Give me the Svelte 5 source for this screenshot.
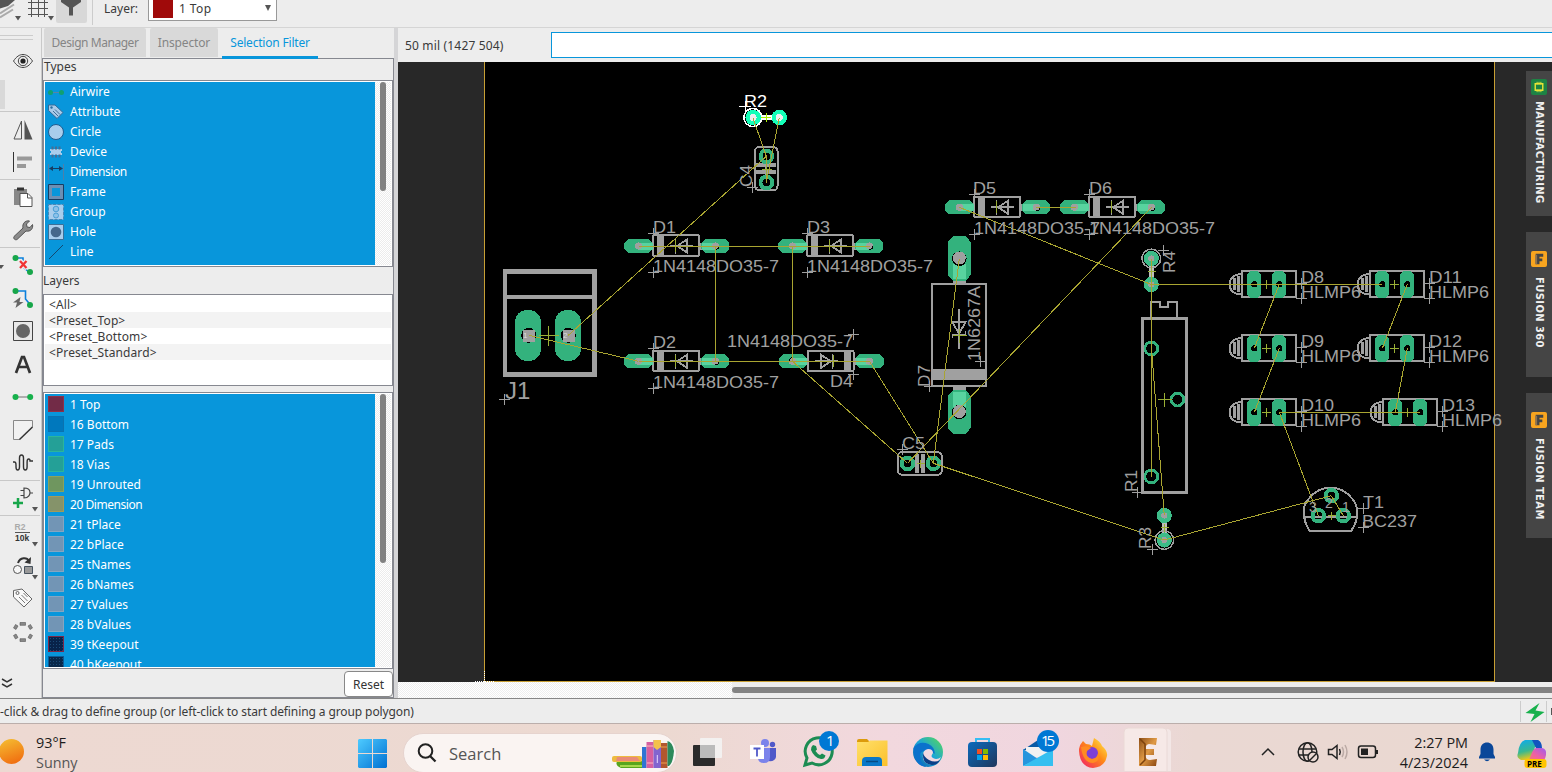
<script>
  const types = ['Airwire', 'Attribute', 'Circle', 'Device', 'Dimension', 'Frame', 'Group', 'Hole', 'Line'];
  const presets = ['<All>', '<Preset_Top>', '<Preset_Bottom>', '<Preset_Standard>'];
  const layers = [
    ['1', 'Top', '#722b47', '#8f3048'],
    ['16', 'Bottom', '#0078bd', '#0a72b0'],
    ['17', 'Pads', '#24a097', '#2bb59a'],
    ['18', 'Vias', '#24a097', '#2bb59a'],
    ['19', 'Unrouted', '#6f965f', '#8aa25c'],
    ['20', 'Dimension', '#85936a', '#a39a5a'],
    ['21', 'tPlace', '#7295b5', '#86a5c0'],
    ['22', 'bPlace', '#7295b5', '#86a5c0'],
    ['25', 'tNames', '#7295b5', '#86a5c0'],
    ['26', 'bNames', '#7295b5', '#86a5c0'],
    ['27', 'tValues', '#7295b5', '#86a5c0'],
    ['28', 'bValues', '#7295b5', '#86a5c0'],
    ['39', 'tKeepout', '#08234a', '#7d2848'],
    ['40', 'bKeepout', '#08284a', '#0a5c98']
  ];
  const tools = [
    ['eye', 30, 0], ['gap', 35, 0], ['sep', 1, 0], ['mirror', 36, 0], ['align', 28, 3], ['sep', 1, 0],
    ['paste', 34, 0], ['wrench', 32, 1], ['sep', 1, 0], ['ripup', 34, 0], ['route', 32, 0], ['hole', 34, 0],
    ['text', 34, 0], ['wire', 30, 0], ['miter', 36, 0], ['meander', 30, 2], ['sep', 1, 0], ['gate', 34, 0],
    ['sep', 1, 0], ['value', 34, 0], ['replace', 34, 0], ['tag', 28, 0], ['ring', 40, 0]
  ];
  const docks = [['MANUFACTURING', 'chip', 0], ['FUSION 360', 'f', 11], ['FUSION TEAM', 'f', 11]];

  const diodes = [[677, 246, 0], [677, 361.3, 0], [831, 246, 0], [831, 361.3, 180], [998, 207.3, 0], [1113, 207.3, 0]];
  const leds = [[1266.5, 284.3], [1266.5, 348.3], [1266.5, 412.3], [1394.5, 284.3], [1394.5, 348.3], [1407.5, 412.3]];
  const rings = [
    [766.3, 156.3, 4], [766.3, 182.5, 4], [907.5, 463.3, 4], [933.3, 463.3, 4],
    [1331.3, 495.7, 4], [1318.3, 515.7, 4], [1343.3, 515.7, 4],
    [1151.3, 348.5, 2.8], [1177.5, 399.5, 2.8], [1151.3, 476.5, 2.8]
  ];
  const wires = [
    [752.8, 117.5, 766.3, 156.3], [779.3, 117.5, 766.3, 182.5], [766.3, 156.3, 766.3, 182.5], [766.3, 156.3, 568.3, 335.3],
    [528.7, 335.3, 638.5, 361.3], [638.5, 246.5, 869.5, 246.5], [638.5, 361.5, 869.5, 361.5], [715.5, 246, 715.5, 361],
    [792.5, 246, 792.5, 361], [792.5, 361.3, 907.5, 463.3], [869.5, 361.3, 933.3, 463.3], [959.3, 258.7, 933.3, 463.3],
    [1151.5, 207.3, 907.5, 463.3], [959.3, 207.3, 1151.3, 284.5], [1035.5, 207.5, 1075.5, 207.5],
    [1151.3, 284.5, 1382.3, 284.5], [1151.5, 284.5, 1151.5, 476.5], [1151.5, 348.5, 1164.3, 515.5],
    [1279.3, 284.3, 1254.3, 348.3], [1279.3, 348.3, 1254.3, 412.3], [1279.3, 412.5, 1420.3, 412.5],
    [1407.3, 284.3, 1382.3, 348.3], [1407.3, 348.3, 1395.3, 412.3], [1279.3, 412.3, 1318.3, 515.7],
    [1331.3, 495.7, 1343.3, 515.7], [1164.3, 540, 1331.3, 495.7], [933.3, 463.3, 1164.3, 540], [1151.5, 258.5, 1151.5, 284]
  ];
  const labels = [
    ['D1', 653, 233, 23], ['D3', 807, 233, 23], ['D2', 653, 348, 23], ['D4', 830, 387, 23], ['D5', 973, 194, 23], ['D6', 1089, 194, 23],
    ['1N4148DO35-7', 653, 272, 126], ['1N4148DO35-7', 807, 272, 126], ['1N4148DO35-7', 653, 388, 126], ['1N4148DO35-7', 727, 347, 126],
    ['1N4148DO35-7', 974, 234, 126], ['1N4148DO35-7', 1089, 234, 126],
    ['C5', 902, 449, 23], ['T1', 1363, 508, 21], ['BC237', 1362, 527, 55],
    ['D8', 1301, 283, 23], ['D9', 1301, 347, 23], ['D10', 1301, 411, 33], ['D11', 1429, 283, 33], ['D12', 1429, 347, 33], ['D13', 1442, 411, 33],
    ['HLMP6', 1301, 298, 60], ['HLMP6', 1301, 362, 60], ['HLMP6', 1301, 426, 60], ['HLMP6', 1429, 298, 60], ['HLMP6', 1429, 362, 60], ['HLMP6', 1442, 426, 60]
  ];
  const turned = [
    ['C4', 752, 187, 22], ['1N6267A', 980, 361, 75], ['D7', 929.5, 387, 22], ['R4', 1175, 273, 22], ['R1', 1136.5, 492, 22], ['R3', 1151, 549, 22]
  ];
  const marks = [
    [653.5, 233.5], [653.5, 272.5], [807.5, 233.5], [807.5, 272.5], [653.5, 348.5], [653.5, 388.5], [853.5, 334.5], [853.5, 374.5],
    [974.5, 194.5], [974.5, 234.5], [1089.5, 194.5], [1089.5, 234.5], [504.5, 399.5], [752.5, 187.5], [980.5, 361.5], [929.5, 386.5],
    [902.5, 449.5], [1163.5, 250.5], [1137.5, 492.5], [1152.5, 549.5], [1363.5, 508.5], [1363.5, 527.5],
    [1301.5, 283.5], [1301.5, 298.5], [1301.5, 347.5], [1301.5, 362.5], [1301.5, 411.5], [1301.5, 426.5],
    [1429.5, 283.5], [1429.5, 298.5], [1429.5, 347.5], [1429.5, 362.5], [1442.5, 411.5], [1442.5, 426.5]
  ];
  const centres = [[548.5, 335.5, 10], [766.5, 169.5, 5], [920.5, 463.5, 4], [959.5, 335.5, 7], [1164.5, 399.5, 7], [1151.5, 271.5, 4], [1164.5, 527.5, 4], [1331.5, 515.5, 4]];
</script>

{#snippet caret()}
  <path d="M18.5 15.5h6l-3 4.500z" fill="#555" />
{/snippet}

{#snippet tool(name)}
  <svg class="ico" viewBox="0 0 20 20">
    {#if name === 'eye'}
      <path d="M.5 10C3.500 5.500 6.500 3.500 10 3.500s6.500 2 9.500 6.500c-3 4.500-6 6.500-9.500 6.500S3.500 14.500.500 10z" fill="none" stroke="#444" />
      <circle cx="10" cy="10" r="4.700" fill="none" stroke="#444" /><circle cx="10" cy="10" r="2.600" fill="#222" />
    {:else if name === 'mirror'}
      <path d="M8.500 1v18H1z" fill="none" stroke="#555" /><path d="M11.500 0v19.500h8z" fill="#555" />
    {:else if name === 'align'}
      <path d="M.5 0v20" stroke="#333" /><path d="M4 4.500h15v4H4zM4 12h9v4H4z" fill="#999" />
    {:else if name === 'paste'}
      <path d="M1 2h13v4H7v12H1z" fill="#888" /><path d="M4 .500h7v3H4z" fill="#333" />
      <path d="M7 6.500h8l4 4v9H7z" fill="#fff" stroke="#555" /><path d="M14.500 6.500v4.500H19" fill="none" stroke="#555" />
    {:else if name === 'wrench'}
      <path d="M1 16.500 10 8C9 4 12 0 16.500 1l-3 3 .500 3 3 .500 2.500-3c1 4-2 7.500-6.500 6.500L4 19.500c-2 1-4-1-3-3z" fill="#8b8b8b" stroke="#555" />
    {:else if name === 'ripup'}
      <path d="M2 3h8v9l7 6" fill="none" stroke="#0a80dc" stroke-width="1.600" /><circle cx="2.500" cy="3" r="3" fill="#17a64a" /><circle cx="17" cy="17" r="3" fill="#17a64a" />
      <path d="M6.500 5.500l8 8M14.500 5.500l-8 8" stroke="#eee" stroke-width="5" /><path d="M7 6l6.500 7M13.500 6 7 13" stroke="#f03434" stroke-width="2.300" />
      <path d="M-15 10h6l-3 4z" fill="#555" />
    {:else if name === 'route'}
      <path d="M2 3h10.500v8l5 6" fill="none" stroke="#0a80dc" stroke-width="1.600" /><circle cx="2.500" cy="3" r="3" fill="#17a64a" /><circle cx="17" cy="17" r="3" fill="#17a64a" />
      <path d="M7.500 9 0 14.500h4L2.500 20l8-6H6.500z" fill="#666" />
    {:else if name === 'hole'}
      <path d="M.5.500h19v19H.500z" fill="#e9e9e9" stroke="#444" /><circle cx="10" cy="10" r="7" fill="#666" />
    {:else if name === 'text'}
      <path d="M3 18 9 2h2l6 16M5.500 12h9" fill="none" stroke="#333" stroke-width="2.700" />
    {:else if name === 'wire'}
      <path d="M3 10h14" stroke="#999" stroke-width="1.500" /><circle cx="2.500" cy="10" r="3" fill="#17b14c" /><circle cx="17.200" cy="10" r="3" fill="#17b14c" />
    {:else if name === 'miter'}
      <path d="M19.500 7V.500H.500v19H7" fill="#f1f1f1" stroke="#888" /><path d="M6.500 19.500 19.500 7" stroke="#333" stroke-width="1.500" />
    {:else if name === 'meander'}
      <path d="M0 9h1.500q1.500 0 1.500 3v2q0 3 1.700 3t1.800-3V5q0-3 2-3t2 3v9q0 3 1.800 3t1.800-3V9q0-3 1.500-3t1.400 2H20" fill="none" stroke="#333" stroke-width="1.400" />
    {:else if name === 'gate'}
      <path d="M11 0c5 0 6 3 6 4.500s-1 5.500-6 5.500zM7.500 2.500H11M7.500 7.500H11M17 5h3" fill="none" stroke="#444" stroke-width="1.200" />
      <path d="M5 10v10M0 15h10" stroke="#17a64a" stroke-width="2.500" /><path d="M19 19h6l-3 4.500z" fill="#555" />
    {:else if name === 'value'}
      <text x="1.500" y="7" class="tt" fill="#aaa">R2</text><path d="M2 9.500h15" stroke="#555" /><text x="2" y="18" class="tt" fill="#333">10k</text><path d="M19 19h6l-3 4.500z" fill="#555" />
    {:else if name === 'replace'}
      <path d="M5 6c2-6 9-6 11-2" fill="none" stroke="#333" stroke-width="2" /><path d="m18 0-.5 7-6-1.500z" fill="#333" />
      <circle cx="4.500" cy="12.500" r="4" fill="#f7f7f7" stroke="#555" /><path d="M11.500 9.500h8v7h-8z" fill="#999" stroke="#47525e" /><path d="M19 18h6l-3 4.500z" fill="#555" />
    {:else if name === 'tag'}
      <path d="M.5 2.500V9L11 19l8-8L9 1z" fill="#f8f8f8" stroke="#666" /><circle cx="4.500" cy="5" r="1.500" fill="none" stroke="#666" /><path d="m6 9 6 6M8.500 7l6 6M10.500 5l4 4" stroke="#777" />
    {:else if name === 'ring'}
      <g fill="#888" stroke="#555" stroke-width=".6"><path d="M7 .500h5.500v2.800H7zM7 16.700h5.500v2.800H7zM.500 6l2-3.500 2.500 1.500-2 3.500zM15 4l2.500-1.500 2 3.500L17 7.500zM.500 13.500 3 12l2 3.500L2.500 17zM17 12l2.500 1.500-2 3.500-2.500-1.500z" /></g>
    {/if}
  </svg>
{/snippet}

{#snippet typeIcon(name)}
  <svg class="tico" viewBox="0 0 16 16">
    {#if name === 'Airwire'}
      <path d="M5 8.500h6" stroke="#5b83a5" /><circle cx="2.500" cy="8.500" r="2.500" fill="#10a071" /><circle cx="13.500" cy="8.500" r="2.500" fill="#10a071" />
    {:else if name === 'Attribute'}
      <path d="M.5 1v5.500l8.500 8 6-6-8-7.500z" fill="#a9cbe9" stroke="#356a98" /><circle cx="3.500" cy="3.500" r="1.200" fill="#2b6c9e" /><path d="m5 7 5 5M7 5.500l5 5" stroke="#416d95" />
    {:else if name === 'Circle'}
      <circle cx="8" cy="8" r="7.500" fill="#a9cdec" stroke="#1f5c90" />
    {:else if name === 'Device'}
      <path d="M2 5h12v2h-1v2h1v2H2V9h1V7H2z" fill="#a9cdec" /><path d="M4.500 2.500v3M8 2.500v3M11.500 2.500v3M4.500 10.500v3M8 10.500v3M11.500 10.500v3" stroke="#446d95" stroke-width="2" />
    {:else if name === 'Dimension'}
      <path d="M.5 0v16M15.500 0v16" stroke="#4d80aa" /><path d="M2 4.500h12" stroke="#163d63" /><path d="M1 4.500 5 2v5zM15 4.500 11 2v5z" fill="#163d63" />
    {:else if name === 'Frame'}
      <path d="M.5.500h15v15H.500z" fill="#6c8fb4" stroke="#163d63" /><path d="M4 4h8v8H4z" fill="#0896db" />
    {:else if name === 'Group'}
      <path d="M.5.500h15v15H.500z" fill="#a9cdec" stroke="#4a86b5" stroke-dasharray="3 1.500" /><g fill="#8dc1e8" stroke="#4b9fd6"><circle cx="8" cy="5" r="2.800" /><circle cx="8" cy="11.500" r="2.500" /></g>
    {:else if name === 'Hole'}
      <path d="M.5.500h15v15H.500z" fill="#a9cdec" stroke="#3b7099" /><circle cx="8" cy="8" r="5.300" fill="#46688b" />
    {:else}
      <path d="M1 15 15 1" stroke="#14486f" />
    {/if}
  </svg>
{/snippet}

<div class="screen">
  <header class="top">
    <svg class="stack" viewBox="0 0 92 26">
      <path d="M0 17.500l13-8M0 13.500l14-9" stroke="#aaa" fill="none" stroke-width="2" /><path d="M0 8.500 8 6l7-6H0z" fill="#555" />
      <path d="M15 16h6l-3 4.500zM48 16h6l-3 4.500z" fill="#555" />
      <path d="M31.500 0v17M38.500 0v17M44.500 0v17M28 2.500h20M28 8.500h20M28 14.500h20" stroke="#555" />
      <rect x="56" y="-4" width="31" height="27" rx="2" fill="#d8d8d8" /><path d="M61 0h20v2l-8 5.500v8h-4v-8L61 2z" fill="#555" />
    </svg>
    <span class="vsep"></span>
    <span class="lab">Layer:</span>
    <div class="combo"><i></i><span>1 Top</span><svg viewBox="0 0 6 6"><path d="M0 0h6L3 6z" fill="#555" /></svg></div>
  </header>

  <main>
    <nav class="tools">
      <div class="grip"></div>
      {#each tools as [name, h, mb]}
        {#if name === 'sep'}<hr />
        {:else if name === 'gap'}<div class="gap"><i></i></div>
        {:else}<div class="tool" style="height:{h}px;margin-bottom:{mb}px">{@render tool(name)}</div>{/if}
      {/each}
      <svg class="more" viewBox="0 0 12 10"><path d="m1 1 5 3 5-3M1 6l5 3 5-3" fill="none" stroke="#333" stroke-width="1.500" /></svg>
    </nav>

    <aside>
      <div class="tabs"><span class="t1">Design Manager</span><span class="t2">Inspector</span><span class="t3">Selection Filter</span></div>
      <section class="panel">
        <h3>Types</h3>
        <div class="list types">
          <ul>{#each types as t}<li>{@render typeIcon(t)}<span class:tight={t === 'Dimension'}>{t}</span></li>{/each}</ul>
          <div class="bar"><i style="height:109px"></i></div>
        </div>
        <h3 class="second">Layers</h3>
        <div class="presets">{#each presets as p}<div>{p}</div>{/each}</div>
        <div class="list layers">
          <ul>{#each layers as [n, t, c, b]}<li><i class:dots={n > 38} style="background-color:{c};border-color:{b}"></i><span class:tight={t === 'Dimension'}>{n} {t}</span></li>{/each}</ul>
          <div class="bar"><i style="height:169px"></i></div>
        </div>
        <div class="foot"><button>Reset</button></div>
      </section>
    </aside>

    <div class="editor">
      <div class="cmd"><span>50 mil (1427 504)</span><div class="input"></div></div>
      <div class="canvas">
        <svg class="board" viewBox="398 62 1128 620">
          <rect x="484" y="62" width="1011" height="620" fill="#000" />
          <path d="M484.500 62V681.500H1494.500V62" fill="none" stroke="#c79f34" />
          <path d="M475 681.500h20M484.500 671v11" stroke="#fff" stroke-dasharray="1 1" />

          <g class="line">
            <rect x="505.200" y="271.300" width="89.300" height="103.300" stroke-width="4.500" /><path d="M505 297h90" stroke-width="4" />
            <rect x="755" y="147.200" width="22.500" height="43" rx="4" stroke-width="2" />
            <path d="M756 165h20M756 171.700h20" stroke-width="4" /><path d="M766.300 160v19" stroke-width="2" />
            <rect x="898" y="452.200" width="43.700" height="22.500" rx="4" stroke-width="2" />
            <path d="M917 454v19M923 454v19" stroke-width="4" />
            <rect x="932" y="284" width="54" height="102" stroke-width="2" /><path d="M932 374.500h54" stroke-width="11" />
            <path d="M959.300 278v5M959.300 387v5" stroke-width="13" />
            <path d="M959 309v40M952.500 322h13L959 334zM952.500 338v-3h13v-4" stroke-width="1.800" />
            <rect x="1142.500" y="318.500" width="43.500" height="173.500" stroke-width="3" />
            <path d="M1150.500 318v-16h9.500v5h7.500v-5h9.500v16" stroke-width="2" />
            <path d="M1309.500 530.500C1302 519 1302 505 1309 498.500a27 27 0 0 1 43 0c7 7 7 21-.5 32zM1304 516.700h53" stroke-width="2" />
          </g>

          {#each diodes as [x, y, r]}
            <g transform="translate({x} {y}) rotate({r})">
              <g class="line"><rect x={r ? -22.5 : -24} y={r ? -10 : -10.7} width="46" height="20.500" rx="1.500" stroke-width="2" /><path d="M-16.500-10v20" stroke-width="7" /><path d="M-25 0h2M23 0h2" stroke-width="7" />
                <path d="M-7 0H16M-1.500-7.500V7.500M10-6.500V6.500L0 0z" stroke-width="1.800" /></g>
              <path class="pad" d="M-53-3l4-4h20.500l4 4V3l-4 4H-49l-4-4zM24-3l4-4H48l4 4V3l-4 4H28l-4-4z" />
              <path d="M-38.500 0h14M24.500 0h14" stroke="#58d39f" stroke-width="7" />
              <circle cx="-38.500" cy="0" r="3.600" fill="#a0a0a0" /><circle cx="38.500" cy="0" r="3.600" fill="#a0a0a0" /><path d="M38 3.500a3.500 3.500 0 0 0 4-3" stroke="#000" fill="none" />
              <path d="M-2-6v12" stroke="#9aaf35" />
            </g>
          {/each}

          {#each leds as [x, y]}
            <g transform="translate({x} {y})">
              <g class="line"><rect x="-24.300" y="-13" width="53.500" height="26" stroke-width="2" /><path d="M-25-10h-3q-9 2-9 10t9 10h3" stroke-width="2" /><path d="M-28-8v16M-32-6V6" stroke-width="2.500" /></g>
              <path class="pad" d="M-19.500-10l3.500-3.700h7l3.500 3.700V10l-3.500 3.700h-7l-3.500-3.700zM5.500-10l3.500-3.700h7l3.500 3.700V10l-3.500 3.700H9L5.500 10z" />
              <circle cx="-12.200" cy="0" r="3.200" /><circle cx="12.800" cy="0" r="3.200" />
              <path d="M-4.500 0h9M0-4.500v9" stroke="#9aaf35" />
            </g>
          {/each}

          <rect class="pad" x="515" y="310" width="26" height="51" rx="12" /><rect class="pad" x="555" y="310" width="26" height="51" rx="12" />
          <circle cx="528.700" cy="335.300" r="7.500" /><circle cx="568.300" cy="335.300" r="7.500" />
          <path d="M522.500 329.500h12v12h-12zM562.500 329.500h12v12h-12z" fill="#a0a0a0" />
          <text x="523" y="338" class="tiny">1</text><text x="563" y="338" class="tiny">2</text>
          <path class="pad" d="M948 242l5-6h12.700l5 6v33l-5 6H953l-5-6zM948 396l5-6h12.700l5 6v32l-5 6H953l-5-6z" />
          <path d="M959.300 264v15M959.300 392v15" stroke="#58d39f" stroke-width="13" />
          <circle cx="959.300" cy="258.700" r="7.300" /><circle cx="959.300" cy="258" r="6.500" fill="#a0a0a0" /><circle cx="959.300" cy="412" r="7.300" /><circle cx="959.300" cy="411.500" r="6.500" fill="#a0a0a0" />
          {#each rings as [x, y, w]}<circle cx={x} cy={y} r={7.800 - w / 2} fill="none" stroke="#33b27d" stroke-width={w} />{/each}

          <path d="M1151.300 258v26M1164.300 516v24" stroke="#bdbdbd" stroke-width="5" />
          <g fill="none" stroke="#a0a0a0" stroke-width="1.500"><circle cx="1151.300" cy="258.500" r="9.300" /><circle cx="1164.300" cy="540" r="9.300" /></g>
          {#each [[1151.3, 258.5], [1151.3, 284.5], [1164.3, 515.5], [1164.3, 540]] as [x, y]}
            <circle cx={x} cy={y} r="5.300" fill="#a0a0a0" stroke="#3dbb88" stroke-width="4.500" />
          {/each}
          <path d="M753 117.500h26" stroke="#fff" stroke-width="5" /><circle cx="752.800" cy="117.500" r="9" fill="#000" stroke="#fff" stroke-width="1.500" />
          {#each [753.2, 779.3] as x}<circle cx={x} cy="117.500" r="5.600" fill="#eee" stroke="#14ffb8" stroke-width="4.300" />{/each}
          <path d="M761 117.500h10M766.500 113v9" stroke="#a8f000" />

          {#each wires as [a, b, c, d]}<line x1={a} y1={b} x2={c} y2={d} class="air" />{/each}
          {#each centres as [x, y, s]}<path d="M{x - s} {y}h{2 * s}M{x} {y - s}v{2 * s}" stroke="#9aaf35" />{/each}
          {#each marks as [x, y]}<path d="M{x - 5.500} {y}h11M{x} {y - 5.500}v11" stroke="#a0a0a0" />{/each}
          {#each labels as [t, x, y, w]}<text {x} {y} textLength={w} lengthAdjust="spacingAndGlyphs">{t}</text>{/each}
          {#each turned as [t, x, y, w]}<text transform="translate({x} {y}) rotate(-90)" textLength={w} lengthAdjust="spacingAndGlyphs">{t}</text>{/each}
          <text x="505" y="399" class="big">J1</text>
          <text x="744" y="106.500" textLength="23" lengthAdjust="spacingAndGlyphs" class="hot">R2</text><path d="M739 106.500h12M745.500 101v11" stroke="#fff" />
          <text x="1309" y="512" class="pin">3</text><text x="1325" y="508" class="pin">2</text><text x="1342" y="512" class="pin">1</text>
        </svg>
        <div class="dock">
          {#each docks as [name, icon, gap]}
            <div class="dtab" style="padding-top:{gap + 7}px">
              <svg viewBox="0 0 17 17">
                {#if icon === 'chip'}<rect width="17" height="17" rx="2" fill="#1d8344" /><path d="M4.500 5h8v7h-8z" fill="none" stroke="#e8e337" stroke-width="1.500" /><path d="M6.500 3v3M8.500 3v3M10.500 3v3M6.500 11v3M8.500 11v3M10.500 11v3" stroke="#e8e337" />
                {:else}<rect width="17" height="17" rx="2" fill="#f8a51f" /><path d="M5 3h8v3H9v2h3v3H9v3H5z" fill="#444" /><path d="M4.500 4h2v10h-2z" fill="#8d7352" />{/if}
              </svg>
              <span style="margin-top:{gap ? 10 : 6}px">{name}</span>
            </div>
          {/each}
        </div>
      </div>
      <div class="hscroll"><i></i></div>
    </div>
  </main>

  <div class="status"><span>-click &amp; drag to define group (or left-click to start defining a group polygon)</span>
    <svg viewBox="0 0 32 23"><path d="M.5 1v21M26.500 1v21" stroke="#ccc" /><path d="M19.500 3 5.500 13l9 1-4 8 14-10-9-1.500z" fill="#17b14c" /><path d="M31 8h1v7h-1z" fill="#555" /></svg>
  </div>

  <footer>
    <div class="sun"></div>
    <div class="weather"><span>93°F</span><span>Sunny</span></div>
    <svg class="win" viewBox="0 0 29 29"><defs><linearGradient id="wg" x1="0" y1="0" x2="1" y2="1"><stop offset="0" stop-color="#4ecbff" /><stop offset="1" stop-color="#0070d2" /></linearGradient></defs>
      <path d="M1 0h13v14H0V1zM15 0h13l1 1v13H15zM0 15h14v14H1l-1-1zM15 15h14v13l-1 1H15z" fill="url(#wg)" /></svg>
    <div class="search">
      <svg class="mag" viewBox="0 0 20 20"><circle cx="8.500" cy="8" r="6.800" fill="none" stroke="#222" stroke-width="2" /><path d="m13 13 5.500 5.500" stroke="#222" stroke-width="2.300" /></svg>
      <span>Search</span>
      <svg class="books" viewBox="0 0 64 30">
        <path d="M6 22h28v7H10q-6-2-4-7z" fill="#58a51e" /><path d="M9 27h25" stroke="#a4d84c" stroke-width="2" />
        <rect x="1" y="17" width="30" height="6" rx="2" fill="#eebb3f" /><path d="M6 18h20l3 4H5z" fill="#e98b78" />
        <rect x="31" y="8" width="4.500" height="21" fill="#2f75d3" /><rect x="35.500" y="3" width="7" height="26" fill="#d65fa0" /><path d="M36 7h6M36 24h6" stroke="#fbb" />
        <rect x="42.500" y="1" width="7.500" height="28" fill="#8264cf" /><path d="M42.500 1H50v7l-4 3-3.500-3z" fill="#f3c14a" /><path d="M46.300 16v8" stroke="#e8d9ff" />
        <rect x="50" y="4" width="6.500" height="25" fill="#b2572f" /><path d="M50 8h6M50 24h6" stroke="#f0a050" /><path d="M56.500 2q5 1 6.500 10-1 12-5 15h-1.500z" fill="#2c8a5b" />
      </svg>
    </div>
    <svg class="apps" viewBox="684 725 490 47">
      <defs>
        <linearGradient id="ed" x1="0" y1="1" x2="1" y2="0"><stop offset="0" stop-color="#0c59a4" /><stop offset=".5" stop-color="#1aa5d8" /><stop offset="1" stop-color="#5cdc50" /></linearGradient>
        <linearGradient id="fo" x1="0" y1="0" x2="1" y2="1"><stop offset="0" stop-color="#ffe06b" /><stop offset="1" stop-color="#fbc02a" /></linearGradient>
        <linearGradient id="st" x1="0" y1="0" x2="1" y2="1"><stop offset="0" stop-color="#0b6bbd" /><stop offset="1" stop-color="#20365c" /></linearGradient>
        <linearGradient id="ff" x1="1" y1="0" x2="0" y2="1"><stop offset="0" stop-color="#fff44f" /><stop offset=".45" stop-color="#ff8a16" /><stop offset="1" stop-color="#f0146e" /></linearGradient>
        <linearGradient id="ea" x1="0" y1="0" x2="1" y2="1"><stop offset="0" stop-color="#8d4f17" /><stop offset=".5" stop-color="#e09a45" /><stop offset="1" stop-color="#8b4710" /></linearGradient>
      </defs>
      <rect x="693" y="746" width="22" height="21" rx="1" fill="#2b2b2b" /><rect x="700" y="739" width="22" height="20" rx="1" fill="#f3f3f3" opacity=".9" /><path d="M700 746h15v13h-15z" fill="#bbb" />

      <circle cx="765" cy="744" r="4" fill="#7b83eb" /><circle cx="772.500" cy="745.500" r="2.700" fill="#5059c9" /><path d="M767 749h9v9q-1 5-8 4z" fill="#5059c9" /><path d="M758 749h12v9q0 6-6 6t-6-5z" fill="#7b83eb" />
      <rect x="750" y="746" width="14" height="14" fill="#fff" /><path d="M753.500 749.500h7M757 749.500v8" stroke="#5059c9" stroke-width="1.800" />

      <path d="M805 766l2-7a13.500 13.500 0 1 1 5 5z" fill="none" stroke="#1c8c52" stroke-width="3" /><path d="M813 746l3 1 1 3.500-1.500 1.500q2 3 4.500 4l2-1.500 3.500 2q-1 4-4.500 3.500-7-1.500-10-9-.5-3 2-5z" fill="#1c8c52" />
      <circle cx="829" cy="742" r="10" fill="#0078d4" /><text x="826" y="747" class="badge">1</text>

      <path d="M857 742q0-2 2-2h8l3 3h-13z" fill="#dc9b0b" /><path d="M857 743h11l2-1.500h17.500V767H857z" fill="url(#fo)" /><path d="M862 767v-5q0-4 4-4h12q4 0 4 4v5z" fill="#0a78c8" /><path d="M866 762.500h12" stroke="#064b85" stroke-width="1.500" />

      <circle cx="928" cy="753" r="15" fill="url(#ed)" /><path d="M913.500 749q6-8 15-4 7 4 6 10-8-7-14-1-2 9 6 14-13-1-13-19z" fill="#0b72cc" /><path d="M923 756q0-5 5-6 5 0 5 4-4 5 3 6 3 0 5-2-4 9-13 7-6-3-5-9z" fill="#f1d9e1" /><path d="M923 754q-1 11 9 12 6 0 8-5-5 3-11 0-5-3-6-7z" fill="#0b3f87" />

      <path d="M976 744v-4h13v4" fill="none" stroke="#35bdf3" stroke-width="2" /><rect x="968" y="743" width="29" height="25" rx="4" fill="url(#st)" />
      <path d="M977 750h5v5h-5z" fill="#f25022" /><path d="M983 750h5v5h-5z" fill="#7fba00" /><path d="M977 756h5v5h-5z" fill="#00a4ef" /><path d="M983 756h5v5h-5z" fill="#ffb900" />

      <path d="m1023 751 15-10 15 10z" fill="#0a5aa5" /><path d="M1026 748h24v10h-24z" fill="#f1f1f1" /><path d="m1023 750 15 10-15 7z" fill="#2695dd" /><path d="m1053 750-30 17h30z" fill="#35bff0" />
      <circle cx="1048" cy="742" r="11" fill="#0078d4" /><text x="1041" y="747" textLength="14" class="badge">15</text>

      <path d="M1079 750q1-5 4-8l3 3q4 0 6 2l2-8q6 3 8 8 6 5 5 10-2 11-14 12-13-1-14-17z" fill="url(#ff)" /><circle cx="1092" cy="754" r="6" fill="#7d3fd6" /><path d="M1081 748q6-2 10 1l-4 3q-2 6 5 8 6-1 6-6 3 8-5 10-10 0-12-16z" fill="#ff8b22" />

      <rect x="1128" y="730" width="43" height="50" rx="4" fill="#fff" opacity=".4" /><rect x="1124" y="729" width="43" height="50" rx="4" fill="#f6e9e7" stroke="#ead9d6" />
      <path d="M1139 739h18l-1 7-7-1q-4 1-3 5h8v6h-9q1 5 5 5l7-1-1 7h-17z" fill="url(#ea)" /><path d="m1140 740 5 5v16l-5 5" fill="none" stroke="#7d420d" stroke-width="1.500" />
    </svg>
    <svg class="tray" viewBox="1258 725 124 47">
      <g fill="none" stroke="#222" stroke-width="1.500"><path d="m1262 756 6-6 6 6" /><circle cx="1307.500" cy="753" r="9.300" /><ellipse cx="1307.500" cy="753" rx="4.500" ry="9.300" /><path d="M1299 750h17M1299 756h10" /><circle cx="1313" cy="758" r="5" fill="#ead9d3" /><path d="m1310 761 6-6" />
        <path d="M1328.500 750.500h3.500l5-4v13l-5-4h-3.500zM1339.500 750q1.500 3 0 6" /><path d="M1342 748q3 5 0 10M1345 746q4 7 0 14" stroke="#bbaaa5" /><rect x="1358.500" y="747" width="17" height="11.500" rx="2.500" /></g>
      <path d="M1361 749.500h7v6.500h-7zM1376 751h2v4h-2z" fill="#222" />
    </svg>
    <div class="clock"><span>2:27 PM</span><span>4/23/2024</span></div>
    <svg class="bell" viewBox="0 0 18 20"><path d="M1 15l1.500-3V7.500C2.500 3 5.500.500 9 .500s6.500 2.500 6.500 7V12l1.500 3v1.500H1z" fill="#0a4799" /><path d="M6 17.500h6q-3 3.500-6 0z" fill="#0a4799" /></svg>
    <svg class="pilot" viewBox="0 0 34 30">
      <defs><linearGradient id="cp" x1="0" y1="0" x2=".3" y2="1"><stop offset="0" stop-color="#0caaf0" /><stop offset=".6" stop-color="#38b890" /><stop offset="1" stop-color="#ecc718" /></linearGradient><linearGradient id="cq" x1="1" y1="0" x2="0" y2="1"><stop offset="0" stop-color="#9c5cf2" /><stop offset=".5" stop-color="#ee60a4" /><stop offset="1" stop-color="#fb805c" /></linearGradient></defs>
      <path d="M8 1h12q4 1 4 7h-6l-4 13H4q-5-2-3-7 1-11 7-13z" fill="url(#cp)" /><path d="M15 1h6q4 2 4 8h-6z" fill="#1254bf" /><path d="M19 9h6q5 1 4 7-1 6-5 7H9q3-1 5-7t5-7z" fill="url(#cq)" />
      <rect x="7.500" y="20" width="22" height="9" rx="3" fill="#ffc400" /><text x="10" y="27.500" class="pre">PRE</text>
    </svg>
  </footer>
</div>

<style>
  :global(body) { margin: 0; overflow: hidden; }
  .screen { width: 1552px; height: 772px; overflow: hidden; display: flex; flex-direction: column; background: #ededed; font: 12px/16px "Noto Sans", sans-serif; color: #3a3a3a; }
  .top { height: 27px; flex: none; box-sizing: content-box; border-bottom: 1px solid #d5d5d5; display: flex; align-items: flex-start; overflow: hidden; }
  .stack { width: 92px; height: 26px; }
  .vsep { width: 1px; height: 25px; background: #ccc; }
  .lab { margin: 1px 11px 0 11px; width: 33px; white-space: nowrap; }
  .combo { width: 127px; height: 24px; margin-top: -5px; background: #fff; border: 1px solid #999; display: flex; align-items: center; letter-spacing: .4px; }
  .combo span { margin-top: 2px; }
  .combo i { width: 20px; height: 20px; background: #a00a0a; margin: 0 6px 0 4px; }
  .combo svg { margin-left: auto; width: 6px; height: 6px; margin-right: 5px; }
  main { flex: none; height: 670px; display: flex; }
  .tools { width: 41px; flex: none; display: flex; flex-direction: column; border-right: 1px solid #c9c9c9; }
  .grip { height: 3px; width: 33px; border: solid #ccc; border-width: 1px 0; margin: 7px 0 6px; }
  .tools hr { width: 40px; height: 1px; border: 0; margin: 0; background: #c8c8c8; }
  .tool { display: flex; align-items: center; padding-left: 13px; }
  .gap { height: 35px; } .gap i { display: block; width: 5px; height: 29px; margin-top: 4px; background: #d9d9d9; }
  .ico { width: 20px; height: 20px; overflow: visible; }
  .tt { font: bold 8.500px "Liberation Sans", sans-serif; }
  .more { width: 12px; height: 10px; margin: 26px 0 0 1px; }
  aside { width: 352px; flex: none; border-right: 4px solid #d5d5d7; }
  .tabs { height: 30px; display: flex; align-items: stretch; color: #858585; line-height: 30px; }
  .tabs span { box-sizing: border-box; text-align: center; background: #d9d9d9; white-space: nowrap; height: 29px; border-radius: 2px 2px 0 0; }
  .t1 { width: 102px; margin-left: 2px; letter-spacing: -.45px; } .t2 { width: 68px; margin-left: 4px; letter-spacing: -.15px; }
  .tabs .t3 { width: 96px; margin-left: 4px; background: none; color: #0896db; border-bottom: 3px solid #0896db; height: 31px; position: relative; letter-spacing: -.2px; }
  .panel { box-sizing: border-box; height: 640px; border: 1px solid #868890; display: flex; flex-direction: column; }
  h3 { font: inherit; margin: 0; height: 21px; padding-left: 1px; }
  h3.second { height: 22px; padding: 6px 0 0; box-sizing: border-box; height: 28px; }
  .list, .presets { box-sizing: border-box; border: 1px solid #868890; background: #fff; padding: 1px; }
  .list { display: flex; overflow: hidden; flex: none; }
  .types { height: 187px; } .layers { height: 277px; margin-top: 6px; }
  .presets { height: 92px; flex: none; }
  .presets div { height: 16px; padding-left: 4px; line-height: 17px; letter-spacing: .1px; } .presets div:nth-child(even) { background: #f3f3f3; }
  ul { margin: 0; padding: 0; list-style: none; width: 330px; background: #0896db; color: #fff; overflow: hidden; }
  li { height: 20px; display: flex; align-items: center; padding-left: 3px; line-height: 22px; white-space: pre; }
  .types li span, .layers li span { padding-top: 1px; } .tight { letter-spacing: -.45px; }
  li i { box-sizing: border-box; width: 16px; height: 16px; border: 1px solid; margin-right: 6px; }
  li i.dots { background-image: radial-gradient(#1a4a78 .7px, transparent .8px); background-size: 3px 3px; }
  .tico { width: 16px; height: 16px; margin-right: 6px; }
  .bar { flex: 1; background: repeating-conic-gradient(#fff 0 25%, #ececec 0 50%) 0 0/2px 2px; }
  .bar i { display: block; width: 6px; margin-left: 5px; background: #828282; border-radius: 3px; }
  .foot { flex: 1; display: flex; justify-content: flex-end; padding-top: 2px; }
  button { width: 49px; height: 26px; background: #fff; border: 1px solid #888; border-radius: 4px; padding: 1px 0 0; font: inherit; color: #333; }
  .editor { width: 1154px; display: flex; flex-direction: column; }
  .cmd { height: 34px; display: flex; align-items: center; }
  .cmd span { width: 146px; padding-left: 7px; padding-top: 2px; letter-spacing: .17px; }
  .input { box-sizing: border-box; height: 26px; flex: 1; background: #fff; border: 1px solid #0896db; border-right: 0; }
  .canvas { height: 620px; background: #282828; display: flex; }
  .board { width: 1128px; height: 620px; flex: none; font: 17px "Liberation Sans", sans-serif; shape-rendering: crispEdges; }
  .board text { fill: #a0a0a0; } .board text.hot { fill: #fff; } .board .big { font-size: 24px; } .board .tiny { font-size: 8px; fill: #ddd; } .board .pin { font-size: 14px; }
  .line { fill: none; stroke: #a0a0a0; } .pad { fill: #33b27d; } .air { stroke: #a9a531; stroke-width: 1; }
  .dock { width: 26px; padding-top: 9px; display: flex; flex-direction: column; gap: 16px; }
  .dtab { box-sizing: border-box; height: 145px; background: #454545; display: flex; flex-direction: column; align-items: center; overflow: hidden; }
  .dtab svg { width: 16px; height: 16px; flex: none; margin-top: 1px; }
  .dtab span { writing-mode: vertical-rl; color: #f0f0f0; font: bold 11px/14px "DejaVu Sans Condensed", "DejaVu Sans", sans-serif; white-space: nowrap; letter-spacing: .45px; }
  .hscroll { height: 16px; box-sizing: border-box; padding: 5px 0 0 334px; background: linear-gradient(#ededed, #ededed) 334px 0 no-repeat, repeating-conic-gradient(#fff 0 25%, #eee 0 50%) 0 0/2px 2px; }
  .hscroll i { display: block; height: 6px; background: #828282; border-radius: 3px 0 0 3px; }
  .status { flex: none; height: 24px; border-top: 1px solid #868686; border-bottom: 1px solid #bbaeab; display: flex; justify-content: space-between; align-items: center; white-space: nowrap; letter-spacing: -.1px; }
  .status span { padding-top: 2px; }
  .status svg { width: 32px; height: 23px; }
  footer { flex: 1; position: relative; display: flex; background: linear-gradient(90deg, #edd9d2 0, #ecd9d1 43%, #f2d8de 57%, #f0d6df 68%, #ead8d3 77%, #ead8d0 100%); font: 14.400px/20px "Open Sans", sans-serif; color: #1c1c1c; }
  .sun { width: 25px; height: 25px; border-radius: 50%; margin: 15px 0 0 -1px; background: linear-gradient(160deg, #f5c033, #f0640c); }
  .weather { width: 322px; margin: 9px 0 0 12px; display: flex; flex-direction: column; } .weather span + span { color: #555; }
  .win { width: 29px; height: 29px; margin-top: 15px; flex: none; }
  .search { box-sizing: border-box; width: 274px; height: 40px; margin: 9px 7px 0 16px; border: 1px solid #e6d3ce; border-radius: 20px; background: #faf4f2; display: flex; align-items: center; font-size: 16.500px; color: #555; }
  .search span { padding-top: 1px; }
  .mag { width: 20px; height: 20px; margin: 0 12px 0 13px; } .books { width: 64px; height: 30px; margin-left: auto; margin-bottom: -2px; margin-right: 1px; }
  .apps { width: 490px; height: 47px; flex: none; } .badge { font: 15px "Open Sans", sans-serif; fill: #fff; }
  .tray { width: 124px; height: 47px; margin-left: 84px; flex: none; }
  .clock { width: 86px; margin-top: 9px; display: flex; flex-direction: column; text-align: right; white-space: nowrap; }
  .bell { width: 18px; height: 20px; margin: 18px 0 0 10px; } .pilot { width: 34px; height: 30px; margin: 15px 0 0 21px; flex: none; } .pre { font: bold 8px "Open Sans", sans-serif; }
</style>
